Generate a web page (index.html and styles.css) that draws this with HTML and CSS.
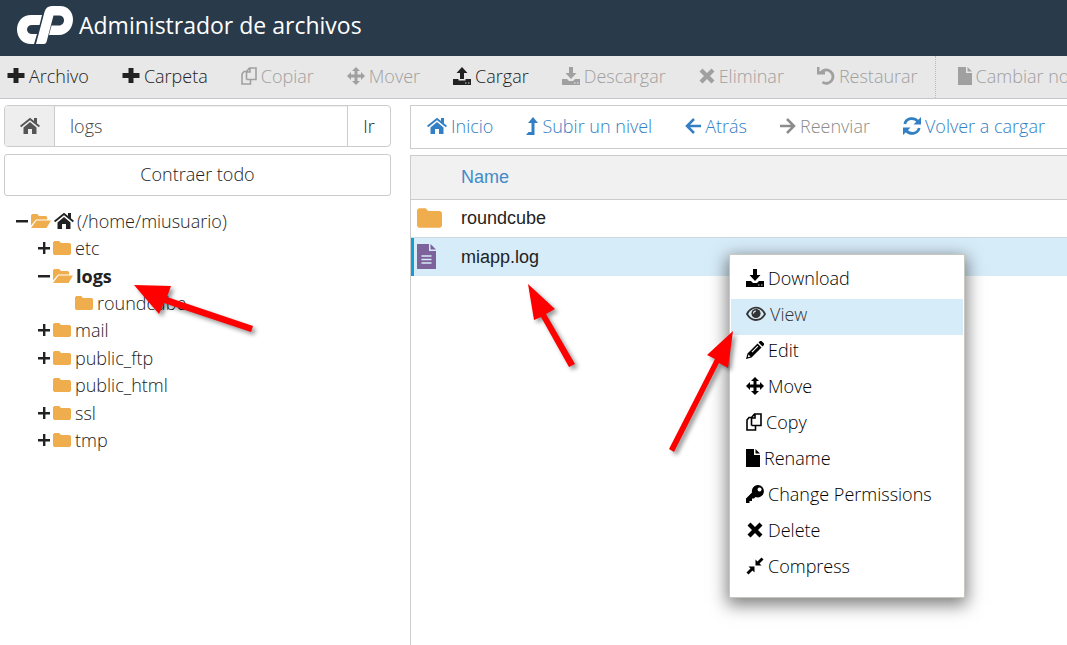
FILE: index.html
```html
<!DOCTYPE html>
<html lang="es">
<head>
<meta charset="utf-8">
<title>Administrador de archivos</title>
<link rel="stylesheet" href="styles.css">
</head>
<body>
<svg class="sprite" aria-hidden="true">
  <symbol id="plus" viewBox="0 0 17 18"><path d="M6 1h5v5h6v5h-6v5H6v-5H0V6h6z"/></symbol>
  <symbol id="copy" viewBox="0 0 16 18"><path fill="none" stroke="currentColor" stroke-width="1.6" d="M5.500 12.500V4.500L8.500 1H15v11.500H5.500M9 1v4H5.500M5.500 4.500H3L1 7V17h8.500v-4.500"/></symbol>
  <symbol id="move" viewBox="0 0 18 18"><path d="M9 0l4 4h-2.500v3.500H14V5l4 4-4 4v-2.500h-3.500V14H13l-4 4-4-4h2.500v-3.500H4V13L0 9l4-4v2.500h3.500V4H5z"/></symbol>
  <symbol id="upload" viewBox="0 0 18 18"><path d="M9 0l5.500 6H11v6H7V6H3.500zM0 12h5.500v1.500h7V12H18v6H0z"/><path class="knock" d="M12 15.500h1.500v1H12zm3 0h1.500v1H15z"/></symbol>
  <symbol id="download" viewBox="0 0 18 18"><path d="M7 0h4v6h3.500L9 12 3.500 6H7zM0 12h5l2 2h4l2-2h5v6H0z"/><path class="knock" d="M12 15.500h1.500v1H12zm3 0h1.500v1H15z"/></symbol>
  <symbol id="times" viewBox="0 0 16 18"><path d="M3.500 1.500L8 6l4.500-4.500L15.500 4.500 11 9l4.500 4.500-3 3L8 12l-4.500 4.500-3-3L5 9 .5 4.500z"/></symbol>
  <symbol id="undo" viewBox="0 0 18 18"><path fill="none" stroke="currentColor" stroke-width="2.800" d="M4 5.500A6.700 6.700 0 1 1 5.500 15.200"/><path d="M0 0h2.500v4.500H8V7.500H0z"/></symbol>
  <symbol id="file" viewBox="0 0 14 18"><path d="M0 0h8v6h6v12H0zM9.500 0L14 4.500H9.500z"/></symbol>
  <symbol id="home" viewBox="0 0 20 16"><path d="M10 4l6.500 5.500V16h-4.500v-5H8v5H3.500V9.500z"/><path fill="none" stroke="currentColor" stroke-width="1.800" d="M.6 8.500L10 1l9.400 7.500"/><path d="M14 0h3v6l-3-2.500z"/></symbol>
  <symbol id="level" viewBox="0 0 12 18"><path d="M7 0l5 6H8.500v12H0l2.500-3h3V6H2z"/></symbol>
  <symbol id="left" viewBox="0 0 16 18"><path fill="none" stroke="currentColor" stroke-width="2.500" d="M9 2L2 9l7 7M2 9h14"/></symbol>
  <symbol id="right" viewBox="0 0 16 18"><path fill="none" stroke="currentColor" stroke-width="2.500" d="M7 2l7 7-7 7M14 9H0"/></symbol>
  <symbol id="refresh" viewBox="0 0 18 18"><path fill="none" stroke="currentColor" stroke-width="2.800" d="M1.800 7C3.500 .8 11 0 15 4.500M16.200 11C14.500 17.200 7 18 3 13.500"/><path d="M18 0v7.500h-7.500zM0 18v-7.500h7.500z"/></symbol>
  <symbol id="minus" viewBox="0 0 12 12"><path d="M0 5h12v2.500H0z"/></symbol>
  <symbol id="expand" viewBox="0 0 12 12"><path d="M5 0h2.400v5H12v2.400H7.400V12H5V7.400H0V5h5z"/></symbol>
  <symbol id="folder" viewBox="0 0 18 14"><path d="M1.300 0h5L8 2h8.700L18 3.300v9.400L16.700 14H1.300L0 12.700V1.300z"/></symbol>
  <symbol id="folder-open" viewBox="0 0 20 14"><path d="M1.300 0h5L8 2h7l1.200 1.200V5.500H5L0 11.500V1.300zM5.500 6.500H20L15.500 14H0z"/></symbol>
  <symbol id="log" viewBox="0 0 19 25"><path d="M0 0h12v7h7v18H0zM13.500 0L19 5.500h-5.500z"/><path stroke="#d7ecf9" stroke-width="1.600" d="M4.500 12h10M4.500 15.500h10M4.500 19h10"/></symbol>
  <symbol id="eye" viewBox="0 0 20 18"><path fill="none" stroke="currentColor" stroke-width="1.800" d="M1 9c4.500-8.400 13.500-8.400 18 0-4.500 8-13.500 8-18 0z"/><circle cx="10" cy="8.500" r="4.600"/><path fill="none" stroke="#d7ecf9" stroke-width="1.200" d="M7.500 8.500A2.600 2.600 0 0 1 10 6"/></symbol>
  <symbol id="pencil" viewBox="0 0 18 18"><path fill-rule="evenodd" d="M11.500 2.500l4 4L5.500 16.500 0 18l1.500-5.500zM12.500 1.500L14 0h1.500L18 2.500V4l-1.500 1.500zM2.500 13.500L1.800 16.200l2.700-.7zM5.500 10.700l6-6 .8.800-6 6z"/></symbol>
  <symbol id="key" viewBox="0 0 18 18"><path fill-rule="evenodd" d="M11.500 0a6.200 6.200 0 1 1-2 12L8 13.500H6V16H3.500v2H0v-4.500l6-6A6.200 6.200 0 0 1 11.500 0zM13.500 2.500a2 2 0 1 0 .1 0z"/></symbol>
  <symbol id="compress" viewBox="0 0 18 18"><path d="M9.500 2.500l2 2L15.500 .5l2 2-4 4 2 2h-6zM2.500 9.500h6v6l-2-2-4 4-2-2 4-4z"/></symbol>
</svg>

<header class="masthead">
  <svg class="logo" viewBox="0 0 56 38" role="img" aria-label="cPanel"><path d="M25 9H14C6 9 0 15 0 23.500S6 38 14 38h3l3-10h-5c-3 0-5-2-5-4.500S12 19 15 19h7.500z"/><path d="M19 38L27.500 6C28.500 2 31 0 35 0h8c8 0 13 6 13 13.500C56 22 50 29 42 29H32l2.500-9.500H42c3 0 5-2.500 5-5.300S45 9.500 42 9.500h-5.500L29.500 36c-.5 1.300-1.300 2-2.500 2z"/></svg>
  <h1>Administrador de archivos</h1>
</header>

<nav class="toolbar" aria-label="Herramientas">
  <button><svg class="i18"><use href="#plus"/></svg>Archivo</button>
  <button><svg class="i18"><use href="#plus"/></svg>Carpeta</button>
  <button disabled><svg class="i16"><use href="#copy"/></svg>Copiar</button>
  <button disabled><svg class="i18"><use href="#move"/></svg>Mover</button>
  <button><svg class="i18"><use href="#upload"/></svg>Cargar</button>
  <button disabled><svg class="i18"><use href="#download"/></svg>Descargar</button>
  <button disabled><svg class="i16"><use href="#times"/></svg>Eliminar</button>
  <button disabled><svg class="i18"><use href="#undo"/></svg>Restaurar</button>
  <button disabled class="divided"><svg class="i14"><use href="#file"/></svg>Cambiar nombre</button>
</nav>

<div class="workspace">
  <aside class="sidebar">
    <form class="path">
      <button type="button" class="path-home" aria-label="Inicio"><svg class="i20"><use href="#home"/></svg></button>
      <input type="text" value="logs" aria-label="Ruta">
      <button type="button" class="go">Ir</button>
    </form>
    <button class="collapse">Contraer todo</button>
    <ul class="tree">
      <li><div class="node"><svg class="toggle"><use href="#minus"/></svg><svg class="folder open"><use href="#folder-open"/></svg><svg class="i20"><use href="#home"/></svg>(/home/miusuario)</div>
        <ul>
          <li><div class="node"><svg class="toggle"><use href="#expand"/></svg><svg class="folder"><use href="#folder"/></svg>etc</div></li>
          <li><div class="node current"><svg class="toggle"><use href="#minus"/></svg><svg class="folder open"><use href="#folder-open"/></svg>logs</div>
            <ul><li><div class="node"><span class="toggle"></span><svg class="folder"><use href="#folder"/></svg>roundcube</div></li></ul>
          </li>
          <li><div class="node"><svg class="toggle"><use href="#expand"/></svg><svg class="folder"><use href="#folder"/></svg>mail</div></li>
          <li><div class="node"><svg class="toggle"><use href="#expand"/></svg><svg class="folder"><use href="#folder"/></svg>public_ftp</div></li>
          <li><div class="node"><span class="toggle"></span><svg class="folder"><use href="#folder"/></svg>public_html</div></li>
          <li><div class="node"><svg class="toggle"><use href="#expand"/></svg><svg class="folder"><use href="#folder"/></svg>ssl</div></li>
          <li><div class="node"><svg class="toggle"><use href="#expand"/></svg><svg class="folder"><use href="#folder"/></svg>tmp</div></li>
        </ul>
      </li>
    </ul>
  </aside>

  <main class="files">
    <nav class="actions" aria-label="Navegación">
      <button><svg class="i20"><use href="#home"/></svg>Inicio</button>
      <button><svg class="i12"><use href="#level"/></svg>Subir un nivel</button>
      <button><svg class="i16"><use href="#left"/></svg>Atrás</button>
      <button disabled><svg class="i16"><use href="#right"/></svg>Reenviar</button>
      <button><svg class="i18"><use href="#refresh"/></svg>Volver a cargar</button>
    </nav>
    <div class="listing">
      <table>
        <thead><tr><th class="kind"></th><th>Name</th></tr></thead>
        <tbody>
          <tr><td class="kind"><svg class="big-folder"><use href="#folder"/></svg></td><td>roundcube</td></tr>
          <tr class="selected"><td class="kind"><svg class="log"><use href="#log"/></svg></td><td>miapp.log</td></tr>
        </tbody>
      </table>
    </div>
  </main>
</div>

<div class="menu" role="menu">
  <button role="menuitem"><svg class="i18"><use href="#download"/></svg>Download</button>
  <button role="menuitem" class="active"><svg class="i20"><use href="#eye"/></svg>View</button>
  <button role="menuitem"><svg class="i18"><use href="#pencil"/></svg>Edit</button>
  <button role="menuitem"><svg class="i18"><use href="#move"/></svg>Move</button>
  <button role="menuitem"><svg class="i16"><use href="#copy"/></svg>Copy</button>
  <button role="menuitem"><svg class="i14"><use href="#file"/></svg>Rename</button>
  <button role="menuitem"><svg class="i18"><use href="#key"/></svg>Change Permissions</button>
  <button role="menuitem"><svg class="i18"><use href="#times"/></svg>Delete</button>
  <button role="menuitem"><svg class="i18"><use href="#compress"/></svg>Compress</button>
</div>

<svg class="pointers" width="1067" height="645" aria-hidden="true">
  <path d="M134 285l37 1-4 11 86 29-2 6-87-29-5 11z"/>
  <path d="M528 284l27 25-9 5 29 50-6 3-28-50-7 3z"/>
  <path d="M733 331l-5 37-9-5-45 89-5-3 46-90-8-4z"/>
</svg>
</body>
</html>
```
FILE: styles.css
```css
* { box-sizing: border-box; }

body {
  margin: 0;
  min-height: 100vh;
  display: flex;
  flex-direction: column;
  overflow: hidden;
  background: #fff;
  color: #222;
  font: 300 18px/26px "Open Sans", sans-serif;
}

button, input { font: inherit; color: inherit; }
button { margin: 0; padding: 0; border: 0; background: none; white-space: nowrap; }
svg { flex: none; fill: currentColor; }

.sprite { position: absolute; width: 0; height: 0; }
.i12 { width: 12px; height: 18px; }
.i14 { width: 14px; height: 18px; }
.i16 { width: 16px; height: 18px; }
.i18 { width: 18px; height: 18px; }
.i20 { width: 20px; height: 18px; }
.knock { fill: #fff; opacity: 0.8; }

.masthead {
  display: flex;
  align-items: center;
  gap: 6px;
  height: 56px;
  padding: 0 17px 6px;
  background: #293a4a;
  color: #fff;
}
.masthead h1 { margin: 0; font-size: 23px; line-height: 32px; font-weight: 400; }
.logo { width: 56px; height: 38px; }

.toolbar {
  display: flex;
  height: 43px;
  background: #e8e8e8;
  border-bottom: 1px solid #c3c7cb;
  overflow: hidden;
}
.toolbar button, .actions button {
  display: flex;
  align-items: center;
  gap: 4px;
  padding: 0 17px 2px 16px;
}
.toolbar button:first-child { padding-left: 7px; }
.toolbar button:disabled { color: #a0a0a0; }
.toolbar .divided { padding-left: 22px; border-left: 1px dotted #bbb; }

.workspace { flex: 1; display: flex; gap: 19px; padding: 6px 0 0 4px; }
.sidebar { flex: 0 0 387px; }

.path { display: flex; height: 42px; border: 1px solid #ccc; border-radius: 4px; overflow: hidden; }
.path-home {
  display: grid;
  place-items: center;
  width: 50px;
  background: #eee;
  color: #555;
  border-right: 1px solid #ccc;
}
.path input { flex: 1; min-width: 0; padding: 0 15px; border: 0; color: #444; background: #fff; box-shadow: inset 0 1px 1px #eee; }
.path .go { width: 43px; border-left: 1px solid #ccc; }

.collapse { display: block; width: 100%; height: 42px; margin-top: 7px; padding-bottom: 2px; border: 1px solid #ccc; border-radius: 3px; }

.tree, .tree ul { list-style: none; margin: 0; padding: 0; }
.tree { padding: 11px 0 0 12px; }
.tree ul { padding-left: 22px; }
.tree li:nth-child(even) { margin-top: 1px; }
.node { display: flex; align-items: center; gap: 3px; height: 27px; }
.current { font-weight: 700; }
.toggle { width: 12px; height: 12px; }
.folder { width: 18px; height: 14px; margin-right: 1px; color: #f0ad4e; }
.open { width: 20px; margin-right: 0; }

.files { flex: 1; min-width: 0; display: flex; flex-direction: column; gap: 6px; }
.actions { display: flex; height: 44px; border: 1px solid #ccc; border-right: 0; color: #337fc4; overflow: hidden; }
.actions button:disabled { color: #8c8c8c; }

.listing { flex: 1; border: solid #ccc; border-width: 1px 0 0 1px; }
.listing table { width: 100%; border-collapse: collapse; font-family: "Liberation Sans", Arial, sans-serif; }
.listing th { height: 43px; padding: 0; text-align: left; font-weight: 400; color: #428bca; background: #f1f1f1; border-bottom: 1px solid #ccc; }
.listing td { height: 38px; padding: 0; }
.listing .selected td { height: 39px; }
.listing .kind { width: 50px; padding-left: 6px; }
.kind svg { display: block; }
.selected { background: #d7ecf9; border-top: 1px solid #ccd9e0; }
.selected .kind { box-shadow: inset 3px 0 #179bd3; }
.big-folder { width: 25px; height: 20px; color: #f0ad4e; }
.log { width: 19px; height: 25px; color: #7d629b; }

.menu {
  position: absolute;
  left: 729px;
  top: 254px;
  width: 236px;
  padding: 8px 1px 10px;
  background: #fff;
  border: 1px solid #c8c8c0;
  box-shadow: 0 5px 16px 2px rgba(0, 0, 0, 0.5);
  color: #000;
}
.menu button { display: flex; align-items: center; gap: 4px; width: 100%; height: 36px; padding: 0 15px 6px; }
.menu .active { background: #d7ecf9; color: #333; }

.pointers {
  position: absolute;
  left: 0;
  top: 0;
  fill: #f00;
  pointer-events: none;
  filter: drop-shadow(3px 3px 2px rgba(0, 0, 0, 0.4));
}
```
